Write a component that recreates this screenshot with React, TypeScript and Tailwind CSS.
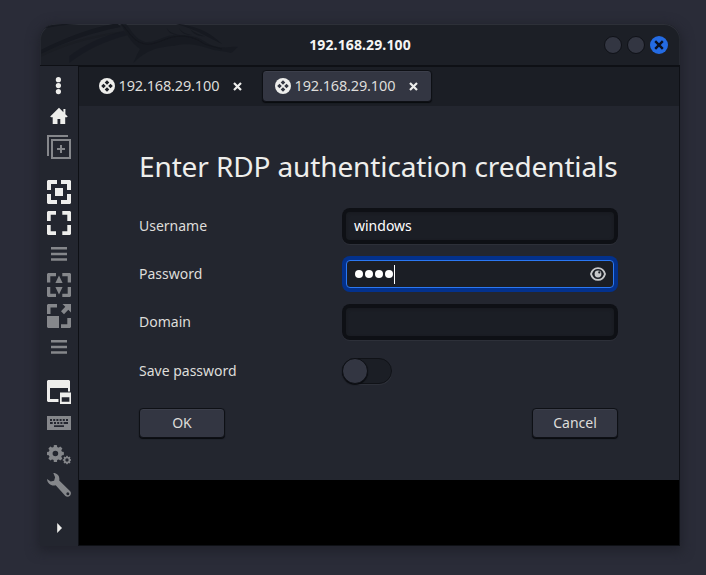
import type { ReactNode } from 'react';

const LIGHT = '#eeeeec';
const DIM = '#85878b';

function Icon({ color = DIM, children }: { color?: string; children: ReactNode }) {
  return (
    <svg width="24" height="24" viewBox="0 0 24 24" fill={color} className="block shrink-0">
      {children}
    </svg>
  );
}

function MenuIcon() {
  return (
    <Icon>
      <path d="M4 5h16v2.6H4zM4 10.7h16v2.6H4zM4 16.2h16v2.6H4z" />
    </Icon>
  );
}

function Gear({ cx, cy, r, hole }: { cx: number; cy: number; r: number; hole: number }) {
  const body = r * 0.8;
  const mid = (body + hole) / 2;
  return (
    <g transform={`translate(${cx} ${cy})`}>
      <circle r={mid} fill="none" stroke={DIM} strokeWidth={body - hole} />
      {[0, 45, 90, 135, 180, 225, 270, 315].map((a) => (
        <rect key={a} x={-r * 0.2} y={-r} width={r * 0.4} height={r * 0.4} rx={r * 0.1} transform={`rotate(${a})`} />
      ))}
    </g>
  );
}

function Sidebar() {
  return (
    <div className="flex w-[38px] flex-col items-center gap-[7px] bg-[#23262f] pt-[7px]">
      <Icon color={LIGHT}>
        <circle cx="11.4" cy="6.7" r="2.6" />
        <circle cx="11.4" cy="12.6" r="2.6" />
        <circle cx="11.4" cy="18.6" r="2.6" />
      </Icon>
      <Icon color={LIGHT}>
        <path d="M12 3.700 3.200 12.500 4 13.300h1.700V20h4.800v-5h2.800v5h4.900v-6.700h1.700l.8-.8-2.300-2.300V5h-2v3.200z" />
      </Icon>
      <Icon>
        <path d="M0 0h21v2H2v19H0z" />
        <path d="M5 5h18v18H5z" fill="none" stroke={DIM} strokeWidth="2" />
        <path d="M13 10h2v3h3v2h-3v3h-2v-3h-3v-2h3z" />
      </Icon>
      <div className="mt-[14px]">
        <Icon color={LIGHT}>
          <path d="M1 0h9v4H4v6H0V1zM14 0h9l1 1v9h-4V4h-6zM0 14h4v6h6v4H1l-1-1zM20 14h4v9l-1 1h-9v-4h6zM8 8h8v8H8z" />
        </Icon>
      </div>
      <Icon color={LIGHT}>
        <path d="M1 0h8v3.700H3.700V10H0V1zM15.300 0H23l1 1v9h-3.700V3.700h-5zM0 14h3.700v6.300H9V24H1l-1-1zM20.300 14H24v9l-1 1h-7.700v-3.700h5z" />
      </Icon>
      <MenuIcon />
      <Icon>
        <path d="M1 0h8v3.300H3.300V9.500H0V1zM15.300 0H23l1 1v8.500h-3.300V3.300h-5.400zM0 14h3.300v6.700H9V24H1l-1-1zM20.700 14H24v9l-1 1h-7.700v-3.300h5.400zM12 2.500l3.600 7.500H8.400zM12 21.500L8.400 14h7.200z" />
      </Icon>
      <Icon>
        <path d="M1 0h9v3.500H3.500V10H0V1zM0 12h12v12H1l-1-1zM24 14v9l-1 1h-9v-3.700h6.300V14zM15.500 0H24v8.500l-2.700-2.700-4.300 4.400-3-3 4.300-4.400z" />
      </Icon>
      <MenuIcon />
      <div className="mt-[14px]">
        <Icon color={LIGHT}>
          <path d="M1 0h21l1 1v10.500h-2V8H3v11h8.500v3H1l-1-1V1z" />
          <path fillRule="evenodd" d="M13 12.500h11V24H13zM14.700 17.200v4.600h7.700v-4.600z" />
        </Icon>
      </div>
      <Icon>
        <path d="M0 5h24v14H0z" />
        <path
          fill="#23262f"
          d="M3 8h2v2H3zM6.200 8h2v2h-2zM9.400 8h2v2h-2zM12.600 8h2v2h-2zM15.800 8h2v2h-2zM19 8h2v2h-2zM3 11h2.700v2H3zM7 11h2v2H7zM10.200 11h2v2h-2zM13.400 11h2v2h-2zM16.600 11H21v2h-4.400zM7 14.200h10V16H7z"
        />
      </Icon>
      <Icon>
        <Gear cx={8.400} cy={11.500} r={8.500} hole={2.800} />
        <Gear cx={20} cy={18} r={4.200} hole={1.700} />
      </Icon>
      <Icon>
        <path
          fillRule="evenodd"
          d="M6.300 0c4.100 0 6.800 3.500 5.900 7.400L23.200 18.200c1.100 1.300 1 3.300-.2 4.600-1.300 1.200-3.300 1.300-4.600.2L8.700 12.300C4.600 13.600.3 10.600 0 6l3.700 2.500 3.400-.7 1-3.500zM20.800 19.300a1.500 1.500 0 1 0 .01 3 1.500 1.500 0 0 0 0-3z"
        />
      </Icon>
      <div className="mt-[12px]">
        <Icon color={LIGHT}>
          <path d="M10.200 7l4.800 5-4.800 5z" />
        </Icon>
      </div>
    </div>
  );
}

function Dragon() {
  return (
    <svg width="210" height="41" viewBox="30 28 630 123" className="absolute left-0 top-0">
      <g fill="#161920">
        <path d="M34 105C100 73 180 38 262 26l10 11C190 52 105 82 34 117z" />
        <path d="M36 38C60 30 95 26 145 28 105 31 70 35 36 43z" />
        <path d="M118 124C160 91 220 62 282 48l10 14C225 79 165 108 118 145z" opacity=".65" />
        <path d="M270 27h18c16 22 30 48 58 55 35 3 48-17 83-20 35-3 62 0 83 11 22 14 40 25 68 25 18 1 32-3 44-1-11 7-8 12-22 18-22-7-43-4-67-14-30-9-60-17-100-8-53 4-85 12-125 52 8-19 14-32 20-42-30-20-42-52-60-76z" opacity=".75" />
        <path d="M410 40c9 14 22 18 40 20-20 2-34-4-40-20zM447 40c8 13 22 18 38 20-20 2-32-6-38-20zM480 42c12 13 29 17 46 23-20 0-36-6-46-23zM430 26c51 5 92 18 122 42l25 20c-42-17-76-46-147-62z" />
        <path d="M34 114C100 88 190 59 270 51l-2 5C185 69 105 92 34 126z" opacity=".35" />
      </g>
      <path d="M275 28c26 29 38 57 76 61 34-1 52-18 83-23 45-6 66 7 91 23l51 14" fill="none" stroke="#111319" strokeWidth="3" opacity=".5" />
    </svg>
  );
}

function Tab({ active = false }: { active?: boolean }) {
  return (
    <div
      className={
        active
          ? 'flex h-8 w-[170px] items-center rounded-[4px] border border-[#0e1015] bg-[#333642] pl-[12px] shadow-[0_1px_1px_#080a0e,inset_0_1px_0_#3c3f4b]'
          : 'flex h-8 w-[170px] items-center border border-transparent pl-[12px]'
      }
    >
      <svg width="16" height="16" viewBox="0 0 16 16" className="shrink-0">
        <circle cx="8" cy="8" r="8" fill={LIGHT} />
        <g fill={active ? '#333642' : '#1c1f26'}>
          <path d="M8 2.200 10.300 4.500 8 6.800 5.700 4.500zM8 9.200l2.300 2.300L8 13.800l-2.300-2.300zM4.500 5.700 6.800 8l-2.300 2.300L2.200 8zM11.500 5.700 13.800 8l-2.300 2.300L9.200 8z" />
        </g>
      </svg>
      <span className="mb-[2px] ml-[3.500px] w-[102px] whitespace-nowrap text-[14.500px] leading-5 tracking-[-0.150px] text-[#deddda]">192.168.29.100</span>
      <svg width="9" height="9" viewBox="0 0 9 9" className="ml-[12px]" stroke={LIGHT} strokeWidth="2.200">
        <path d="M1 1l7 7M8 1L1 8" />
      </svg>
    </div>
  );
}

function Field({ label, children, focus = false }: { label: string; children?: ReactNode; focus?: boolean }) {
  return (
    <div className="flex h-9 items-center">
      <div className="w-[203px] text-[14px] leading-5">{label}</div>
      <div
        className={
          focus
            ? 'h-9 w-[276px] rounded-[8px] bg-[#03318c] p-1'
            : 'h-9 w-[276px] rounded-[8px] bg-[#0e1015] p-1 shadow-[0_1px_0_#2d3039]'
        }
      >
        <div
          className={
            focus
              ? 'flex h-full items-center rounded-[4px] border border-[#2b78f3] bg-[#1b1e25] pl-[8px] pr-[7px]'
              : 'flex h-full items-center rounded-[4px] bg-[#1b1e25] px-2 shadow-[inset_0_1px_3px_#181a1f]'
          }
        >
          {children}
        </div>
      </div>
    </div>
  );
}

function Button({ children }: { children: ReactNode }) {
  return (
    <button className="h-[30px] w-[86px] rounded-[4px] border border-[#0e1015] bg-[#333642] text-[14px] leading-5 shadow-[0_1px_1px_#080a0e,inset_0_1px_0_#3c3f4b]">
      {children}
    </button>
  );
}

export default function App() {
  return (
    <div className="h-[575px] w-[706px] overflow-hidden bg-[#2a2c38] pl-[40px] pt-6 font-['Noto_Sans','Open_Sans',sans-serif] text-[#deddda]">
      <div className="flex h-[522px] w-[640px] flex-col rounded-t-[16px] shadow-[0_3px_12px_2px_#20222b]">
        <header className="relative flex h-[41px] shrink-0 items-center overflow-hidden rounded-t-[16px] bg-[#1c1f26] shadow-[inset_0_1px_0_#2d3038,inset_1px_0_0_#252830,inset_-1px_0_0_#252830]">
          <Dragon />
          <div className="relative flex-1 pl-[76px] text-center text-[14px] font-bold leading-5 text-[#f6f5f4]">
            <span className="tracking-[0.120px]">192.168.29.100</span>
          </div>
          <div className="flex items-center gap-[5px] pr-[12px]">
            <div className="size-[18px] rounded-full border border-[#101218] bg-[#333642]" />
            <div className="size-[18px] rounded-full border border-[#101218] bg-[#333642]" />
            <div className="flex size-[18px] items-center justify-center rounded-full bg-[#246be3]">
              <svg width="10" height="10" viewBox="0 0 10 10" stroke="#0b1020" strokeWidth="2.400">
                <path d="M1.200 1.200l7.600 7.600M8.800 1.200L1.200 8.800" />
              </svg>
            </div>
          </div>
        </header>
        <div className="flex min-h-0 flex-1 border-t border-[#0e1015]">
          <Sidebar />
          <div className="flex w-[602px] flex-col border border-[#0e1015]">
            <nav className="flex h-[39px] shrink-0 items-start gap-[6px] bg-[#1b1e25] pl-[7px] pt-[3px]">
              <Tab />
              <Tab active />
            </nav>
            <main className="h-[374px] shrink-0 bg-[#23262f] pl-[60px] pr-[61px] pt-[40px]">
              <h1 className="whitespace-nowrap text-[28px] leading-[40px] tracking-[-0.120px] text-[#eeeeec]">Enter RDP authentication credentials</h1>
              <div className="mt-[22px] flex flex-col gap-3">
                <Field label="Username">
                  <span className="text-[14px] leading-5 text-white">windows</span>
                </Field>
                <Field label="Password" focus>
                  <div className="flex items-center gap-[2px]">
                    {[0, 1, 2, 3].map((i) => (
                      <span key={i} className="size-2 rounded-full bg-white" />
                    ))}
                  </div>
                  <span className="ml-[1px] h-[19px] w-px bg-white" />
                  <svg width="16" height="14" viewBox="0 0 16 14" className="ml-auto">
                    <path d="M1 7C2 3.500 4.500 1.100 8 1.100S14 3.500 15 7c-1 3.500-3.500 5.900-7 5.900S2 10.500 1 7z" fill="none" stroke="#c7c8ca" strokeWidth="1.900" />
                    <circle cx="8" cy="7" r="3.400" fill="#c7c8ca" />
                    <circle cx="9.300" cy="5.400" r="1.100" fill="#1b1e25" />
                  </svg>
                </Field>
                <Field label="Domain" />
              </div>
              <div className="mt-[18px] flex h-[26px] items-center">
                <div className="w-[203px] text-[14px] leading-5">Save password</div>
                <div className="h-[26px] w-[50px] rounded-full border border-[#101217] bg-[#1b1e25] shadow-[0_1px_0_#2d3039]">
                  <div className="-ml-px -mt-px size-[26px] rounded-full border border-[#0e1015] bg-[#333642] shadow-[0_1px_1px_#090b0f]" />
                </div>
              </div>
              <div className="mt-[24px] flex justify-between">
                <Button>OK</Button>
                <Button>Cancel</Button>
              </div>
            </main>
            <div className="flex-1 bg-black" />
          </div>
        </div>
      </div>
    </div>
  );
}
